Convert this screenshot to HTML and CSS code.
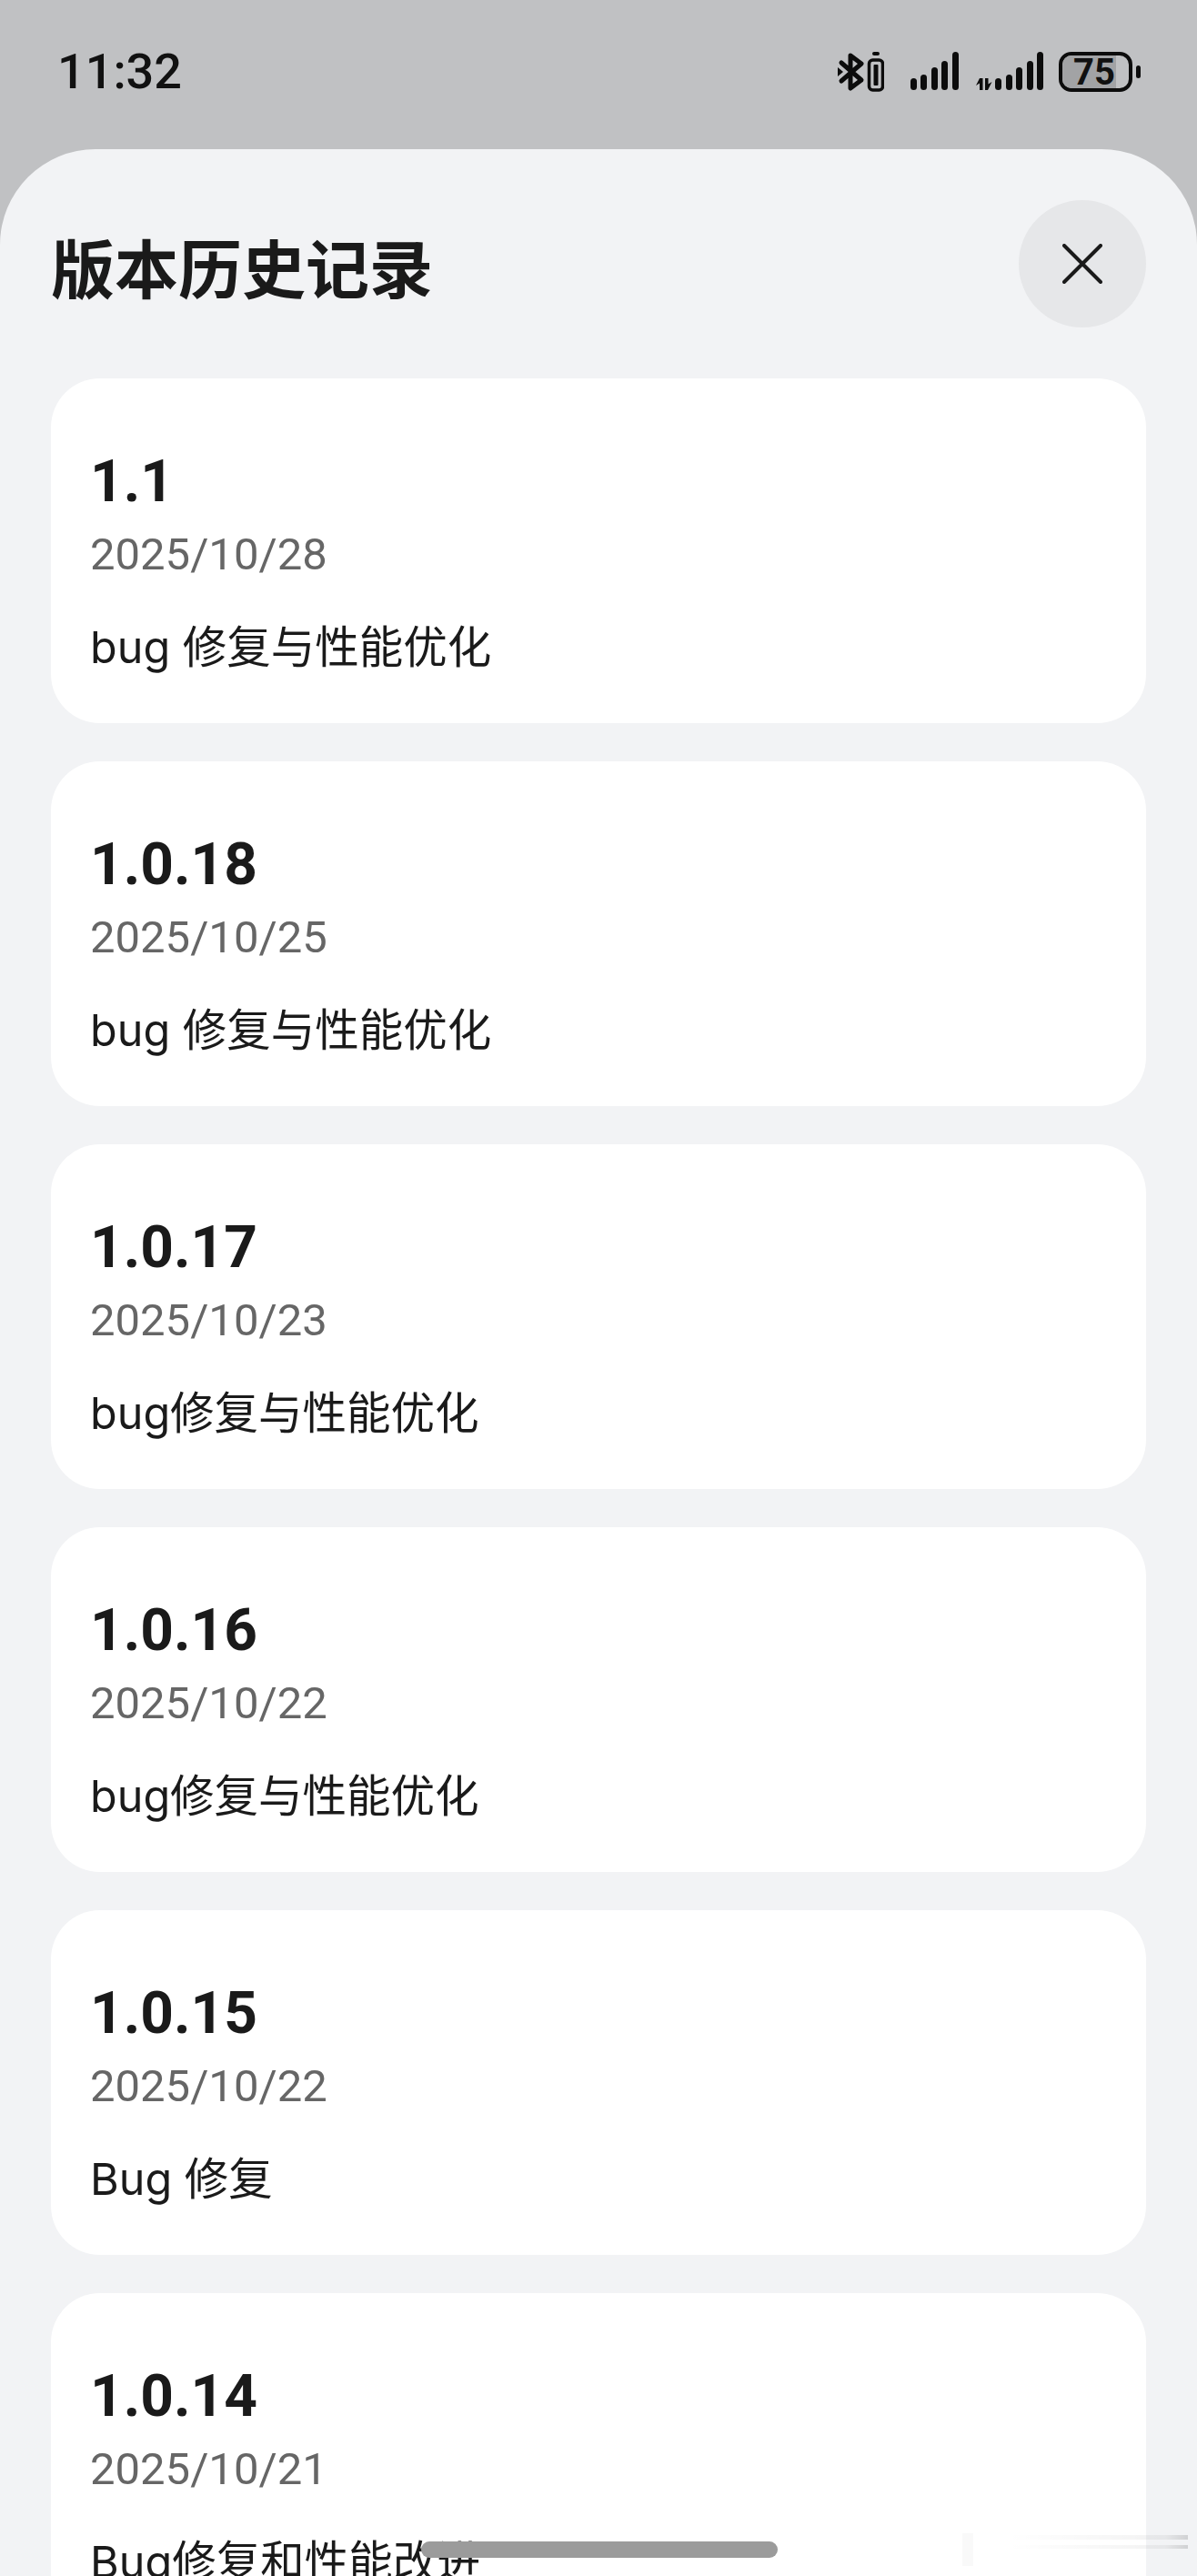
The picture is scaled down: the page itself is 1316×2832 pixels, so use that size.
FILE: index.html
```html
<!DOCTYPE html>
<html lang="zh">
<head>
<meta charset="utf-8">
<title>版本历史记录</title>
<link rel="stylesheet" href="styles.css">
</head>
<body>
<div class="screen">
  <header class="status">
    <span class="time">11:32</span>
    <div class="status-icons">
      <svg class="ic-bt" width="51" height="44" viewBox="0 0 51 44">
        <path class="ic-line" d="M4 12 L26 31 L14 40 V4 L26 13 L4 32" />
        <path class="ic-fill" d="M0 17 L6 22 L0 27Z"/>
        <rect class="ic-fill" x="38" y="0" width="8" height="4" rx="2"/>
        <rect class="ic-line-thin" x="34.5" y="9" width="15" height="33" rx="4"/>
        <rect class="ic-fill" x="39.5" y="14" width="5" height="23" rx="1"/>
      </svg>
      <svg class="ic-sig1" width="53" height="44" viewBox="0 0 53 44">
        <rect class="ic-fill" x="0" y="29" width="7" height="13" rx="3.5"/>
        <rect class="ic-fill" x="11" y="25" width="7" height="17" rx="3.5"/>
        <rect class="ic-fill" x="23" y="17" width="7" height="25" rx="3.5"/>
        <rect class="ic-fill" x="34" y="10" width="7" height="32" rx="3.5"/>
        <rect class="ic-fill" x="46" y="0" width="7" height="42" rx="3.5"/>
      </svg>
      <svg class="ic-sig2" width="74" height="44" viewBox="0 0 74 44">
        <path class="ic-fill" d="M4 29 H7.5 V42 H4 V34.5 L0 37Z M10 29 H13.5 V35.5 L17.5 33 L13 42 H10Z"/>
        <rect class="ic-fill" x="21" y="29" width="7" height="13" rx="3.5"/>
        <rect class="ic-fill" x="33" y="25" width="7" height="17" rx="3.5"/>
        <rect class="ic-fill" x="44" y="17" width="7" height="25" rx="3.5"/>
        <rect class="ic-fill" x="56" y="10" width="7" height="32" rx="3.5"/>
        <rect class="ic-fill" x="67" y="0" width="7" height="42" rx="3.5"/>
      </svg>
      <div class="battery">
        <div class="battery-body">
          <div class="battery-level"></div>
          <span class="battery-text">75</span>
        </div>
        <div class="battery-nub"></div>
      </div>
    </div>
  </header>

  <main class="sheet">
    <div class="sheet-head">
      <h1 class="title">版本历史记录</h1>
      <button class="close" type="button" aria-label="关闭">
        <svg width="44" height="44" viewBox="0 0 44 44"><path class="close-x" d="M2 2 L42 42 M42 2 L2 42"/></svg>
      </button>
    </div>
    <section class="list">
      <article class="card"><div class="ver">1.1</div><div class="date">2025/10/28</div><p class="note">bug 修复与性能优化</p></article>
      <article class="card"><div class="ver">1.0.18</div><div class="date">2025/10/25</div><p class="note">bug 修复与性能优化</p></article>
      <article class="card"><div class="ver">1.0.17</div><div class="date">2025/10/23</div><p class="note">bug修复与性能优化</p></article>
      <article class="card"><div class="ver">1.0.16</div><div class="date">2025/10/22</div><p class="note">bug修复与性能优化</p></article>
      <article class="card"><div class="ver">1.0.15</div><div class="date">2025/10/22</div><p class="note">Bug 修复</p></article>
      <article class="card"><div class="ver">1.0.14</div><div class="date">2025/10/21</div><p class="note">Bug修复和性能改进</p></article>
    </section>
  </main>
  <div class="home-bar"></div>
  <div class="watermark"></div>
</div>
</body>
</html>
```
FILE: styles.css
```css
* { box-sizing: border-box; }
html, body { margin: 0; padding: 0; }
body { font-family: Roboto, "Noto Sans CJK SC", sans-serif; color: #1a1a1a; }

.screen {
  position: relative;
  width: 1316px;
  height: 2832px;
  overflow: hidden;
  background: #c0c1c3;
}

.status {
  height: 164px;
  padding: 0 62px 6px 63px;
  display: flex;
  align-items: center;
  justify-content: space-between;
}
.time { font-size: 54px; line-height: 60px; font-weight: 500; color: #111; }
.status-icons { display: flex; align-items: center; gap: 17px; }
.ic-bt { margin-right: 12px; }
.ic-sig1 { margin-right: 2px; }
.ic-fill { fill: #0c0c0c; }
.ic-line { fill: none; stroke: #0c0c0c; stroke-width: 5; stroke-linejoin: round; stroke-linecap: round; }
.ic-line-thin { fill: none; stroke: #0c0c0c; stroke-width: 3.5; }

.battery { display: flex; align-items: center; gap: 4px; }
.battery-body {
  position: relative;
  width: 81px;
  height: 44px;
  border: 4px solid #0c0c0c;
  border-radius: 14px;
  display: flex;
  align-items: center;
}
.battery-level {
  position: absolute;
  left: 0;
  top: 0;
  bottom: 0;
  width: 59px;
  border-radius: 10px 0 0 10px;
  background: #a2a3a5;
}
.battery-text {
  position: relative;
  padding: 2px 0 0 12px;
  font-size: 40px;
  font-weight: 700;
  line-height: 34px;
  color: #111;
}
.battery-nub { width: 5px; height: 14px; border-radius: 3px; background: #0c0c0c; }

.sheet {
  height: 2668px;
  padding: 56px 56px 0;
  background: #f2f3f5;
  border-radius: 105px 105px 0 0;
}
.sheet-head {
  display: flex;
  align-items: center;
  justify-content: space-between;
  margin-bottom: 56px;
}
.title {
  margin: 6px 0 0;
  font-size: 70px;
  line-height: 84px;
  font-weight: 700;
  color: #1a1a1a;
  font-family: "Noto Sans CJK SC", sans-serif;
}
.close {
  width: 140px;
  height: 140px;
  padding: 0;
  border: 0;
  border-radius: 50%;
  background: #e6e7e9;
  display: flex;
  align-items: center;
  justify-content: center;
}
.close-x { fill: none; stroke: #1a1a1a; stroke-width: 4; stroke-linecap: round; }

.list { display: flex; flex-direction: column; gap: 42px; }
.card {
  height: 379px;
  padding: 78px 43px 0;
  background: #fff;
  border-radius: 54px;
  flex: none;
}
.ver { font-size: 64px; line-height: 72px; font-weight: 700; color: #1a1a1a; }
.date { margin-top: 13px; font-size: 49px; line-height: 62px; color: #666; }
.note {
  margin: 37px 0 0;
  font-family: Inter, "Noto Sans CJK SC", sans-serif;
  font-size: 48.5px;
  line-height: 68px;
  color: #1a1a1a;
}

.home-bar {
  position: absolute;
  left: 463px;
  top: 2794px;
  width: 392px;
  height: 18px;
  border-radius: 9px;
  background: #9b9b9b;
}
.watermark {
  position: absolute;
  left: 1058px;
  top: 2785px;
  width: 248px;
  height: 36px;
  background:
    linear-gradient(90deg, rgba(0,0,0,0) 20%, rgba(0,0,0,.05) 90%, rgba(0,0,0,.14)) 0 2px / 100% 5px no-repeat,
    linear-gradient(90deg, rgba(0,0,0,0) 20%, rgba(0,0,0,.05) 90%, rgba(0,0,0,.14)) 0 13px / 100% 4px no-repeat,
    linear-gradient(rgba(0,0,0,.025), rgba(0,0,0,.025)) 0 0 / 12px 100% no-repeat;
}
```
